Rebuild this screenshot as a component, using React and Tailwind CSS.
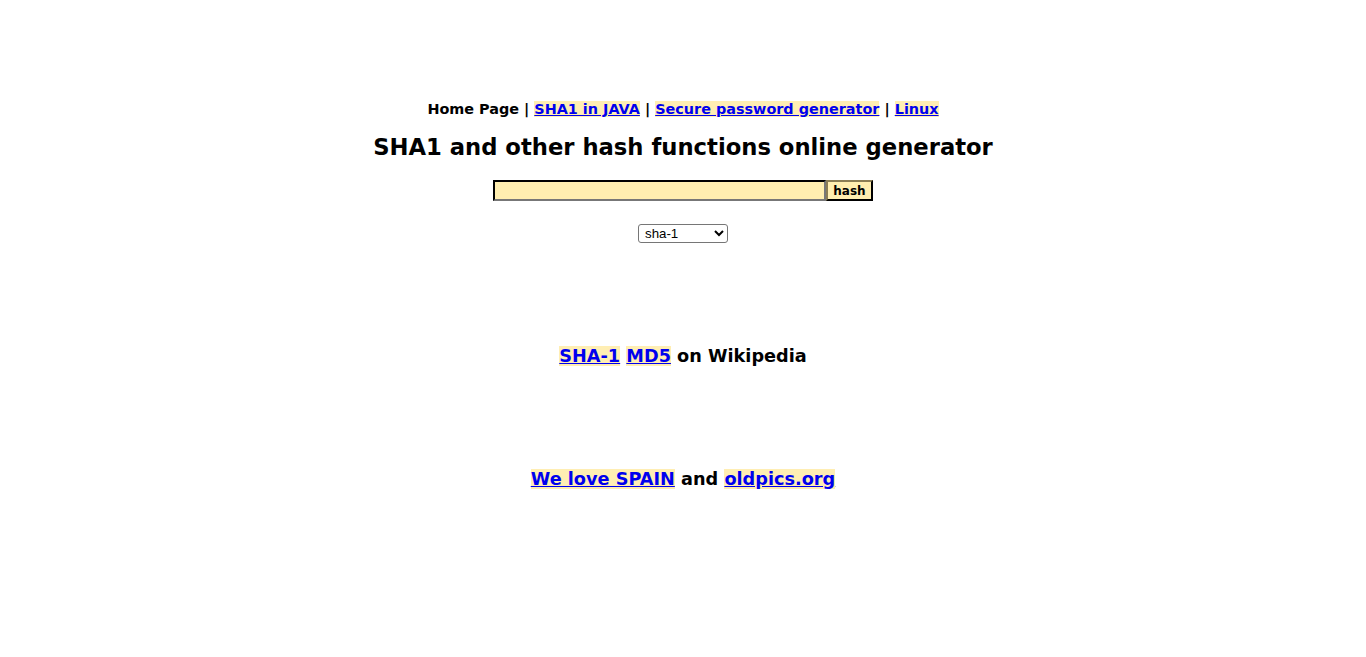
export default function App() {
  const font = { fontFamily: '"DejaVu Sans", Verdana, sans-serif' };
  const link = "bg-[#ffeeb3] text-[#0000ee] underline";

  return (
    <div className="min-h-[657px] bg-white text-black" style={font}>
      <div className="flex flex-col items-center pt-[99px]">
        <p className="text-[14.4px] font-bold leading-[20px]">
          Home Page | <a href="#" className={link}>SHA1 in JAVA</a> |{" "}
          <a href="#" className={link}>Secure password generator</a> |{" "}
          <a href="#" className={link}>Linux</a>
        </p>

        <h1 className="mt-[14px] text-[22.7px] font-bold leading-[28px]">
          SHA1 and other hash functions online generator
        </h1>

        <form className="mt-[19px] flex" onSubmit={(e) => e.preventDefault()}>
          <input
            type="text"
            className="h-[21px] w-[333px] border-2 border-t-black border-l-black border-r-[#777] border-b-[#777] bg-[#ffeeb0] outline-none"
          />
          <button
            type="submit"
            className="h-[21px] w-[47px] border-2 border-t-[#8a7d55] border-l-[#8a7d55] border-r-black border-b-black bg-[#ffeeb0] text-[12px] font-bold leading-none"
          >
            hash
          </button>
        </form>

        <select
          className="mt-[23px] h-[19px] w-[90px] rounded-[3px] border border-[#767676] bg-white pl-[2px] text-[13.3px] leading-none"
          style={{ fontFamily: '"Liberation Sans", Arial, sans-serif' }}
          defaultValue="sha-1"
        >
          <option>sha-1</option>
          <option>md5</option>
          <option>sha-256</option>
          <option>sha-512</option>
        </select>

        <p className="mt-[101px] text-[17.7px] font-bold leading-[24px]">
          <a href="#" className={link}>SHA-1</a> <a href="#" className={link}>MD5</a> on Wikipedia
        </p>

        <p className="mt-[99px] text-[17.7px] font-bold leading-[24px]">
          <a href="#" className={link}>We love SPAIN</a> and{" "}
          <a href="#" className={link}>oldpics.org</a>
        </p>
      </div>
    </div>
  );
}
